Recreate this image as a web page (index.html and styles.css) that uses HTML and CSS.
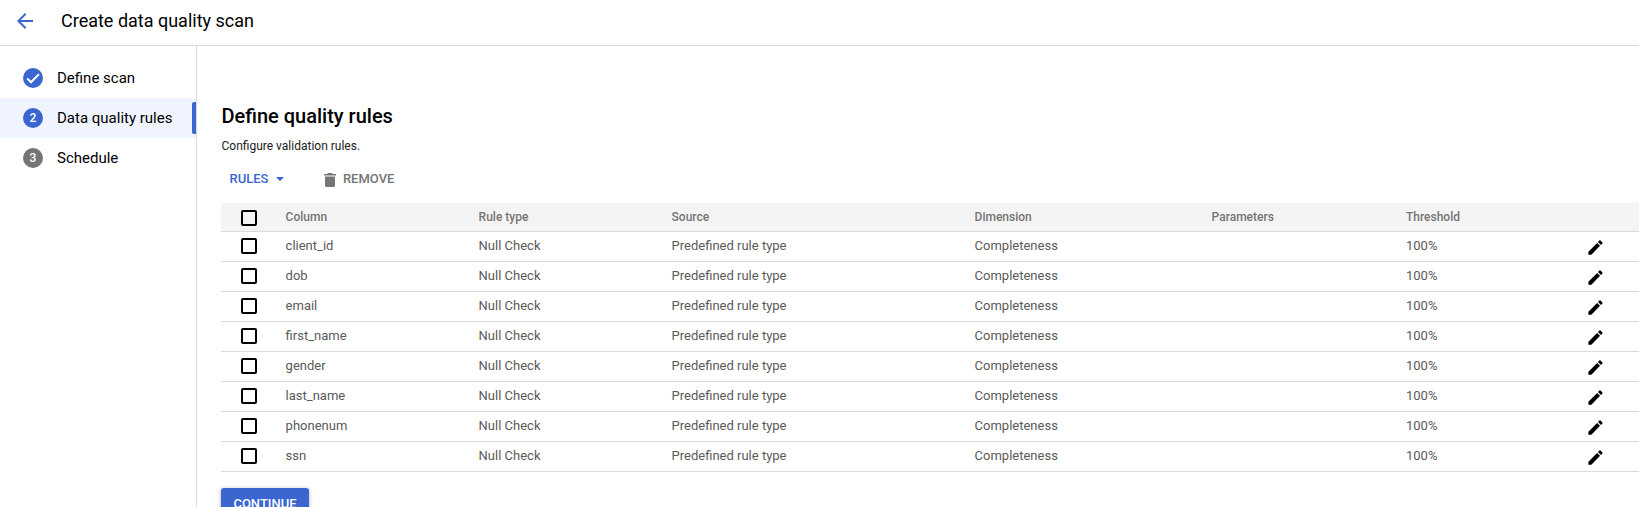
FILE: index.html
```html
<!DOCTYPE html>
<html lang="en">
<head>
<meta charset="utf-8">
<title>Create data quality scan</title>
<link rel="stylesheet" href="styles.css">
</head>
<body>
<svg width="0" height="0" class="defs" aria-hidden="true">
  <symbol id="edit" viewBox="0 0 24 24"><path d="M3 17.25V21h3.75L17.81 9.94l-3.75-3.75L3 17.25zM20.71 7.04a1 1 0 0 0 0-1.41l-2.34-2.34a1 1 0 0 0-1.41 0l-1.83 1.83 3.75 3.75 1.83-1.83z"/></symbol>
</svg>
<header class="topbar">
  <svg class="back" viewBox="0 0 24 24"><path d="M20 11H7.8l5.6-5.6L12 4l-8 8 8 8 1.4-1.4L7.8 13H20z"/></svg>
  <h1 class="title">Create data quality scan</h1>
</header>
<div class="layout">
  <nav class="steps">
    <a class="step"><span class="dot"><svg class="check" viewBox="0 0 20 20"><path d="M4.2 10.5l3.8 3.8 8-8.2"/></svg></span><span class="label">Define scan</span></a>
    <a class="step active"><span class="dot">2</span><span class="label">Data quality rules</span></a>
    <a class="step"><span class="dot pending">3</span><span class="label">Schedule</span></a>
  </nav>
  <main class="content">
    <h2 class="heading">Define quality rules</h2>
    <p class="desc">Configure validation rules.</p>
    <div class="toolbar">
      <button class="tool rules"><span>RULES</span><i class="caret"></i></button>
      <button class="tool remove"><svg class="trash" viewBox="0 0 12 14"><path d="M0 1h3.2L4 0h4l.8 1H12v1.4H0zM1 3.4h10v9A1.6 1.6 0 0 1 9.400 14H2.600A1.600 1.600 0 0 1 1 12.400z"/></svg><span>REMOVE</span></button>
    </div>
    <div class="table">
      <div class="row head"><i class="box"></i><span>Column</span><span>Rule type</span><span>Source</span><span>Dimension</span><span>Parameters</span><span>Threshold</span><span></span></div>
      <div class="row"><i class="box"></i><span>client_id</span><span>Null Check</span><span>Predefined rule type</span><span>Completeness</span><span></span><span>100%</span><svg class="edit"><use href="#edit"/></svg></div>
      <div class="row"><i class="box"></i><span>dob</span><span>Null Check</span><span>Predefined rule type</span><span>Completeness</span><span></span><span>100%</span><svg class="edit"><use href="#edit"/></svg></div>
      <div class="row"><i class="box"></i><span>email</span><span>Null Check</span><span>Predefined rule type</span><span>Completeness</span><span></span><span>100%</span><svg class="edit"><use href="#edit"/></svg></div>
      <div class="row"><i class="box"></i><span>first_name</span><span>Null Check</span><span>Predefined rule type</span><span>Completeness</span><span></span><span>100%</span><svg class="edit"><use href="#edit"/></svg></div>
      <div class="row"><i class="box"></i><span>gender</span><span>Null Check</span><span>Predefined rule type</span><span>Completeness</span><span></span><span>100%</span><svg class="edit"><use href="#edit"/></svg></div>
      <div class="row"><i class="box"></i><span>last_name</span><span>Null Check</span><span>Predefined rule type</span><span>Completeness</span><span></span><span>100%</span><svg class="edit"><use href="#edit"/></svg></div>
      <div class="row"><i class="box"></i><span>phonenum</span><span>Null Check</span><span>Predefined rule type</span><span>Completeness</span><span></span><span>100%</span><svg class="edit"><use href="#edit"/></svg></div>
      <div class="row"><i class="box"></i><span>ssn</span><span>Null Check</span><span>Predefined rule type</span><span>Completeness</span><span></span><span>100%</span><svg class="edit"><use href="#edit"/></svg></div>
    </div>
    <button class="continue">CONTINUE</button>
  </main>
</div>
</body>
</html>
```
FILE: styles.css
```css
* { box-sizing: border-box; }
html, body { margin: 0; height: 100%; overflow: hidden; }
body { display: flex; flex-direction: column; background: #fff; color: #000; font-family: Roboto, "Liberation Sans", sans-serif; }
h1, h2, p { margin: 0; }
button { border: 0; background: none; padding: 0; font-family: inherit; }
.defs { display: none; }

.topbar { flex: none; height: 46px; border-bottom: 1px solid #dadada; display: flex; align-items: center; padding: 0 0 3px 13px; }
.back { width: 24px; height: 24px; margin-right: 24px; fill: #3b66d0; }
.title { font-size: 18px; line-height: 24px; font-weight: 400; }

.layout { flex: 1; display: flex; min-height: 0; }
.steps { flex: none; width: 197px; border-right: 1px solid #dadada; padding-top: 12px; }
.step { display: flex; align-items: center; height: 40px; padding-left: 23px; font-size: 15px; }
.dot { width: 20px; height: 20px; margin-right: 14px; border-radius: 50%; background: #3b66d0; color: #fff; display: flex; align-items: center; justify-content: center; font-size: 12px; font-weight: 500; }
.pending { background: #757575; }
.check { width: 20px; height: 20px; fill: none; stroke: #fff; stroke-width: 2; }
.active { background: #f0f4fe; }
.active::after { content: ""; width: 4px; height: 32px; margin-left: auto; background: #3b66d0; border-radius: 2px 0 0 2px; }

.content { flex: 1; padding: 58px 0 0 24px; min-width: 0; }
.heading { padding-left: 0.5px; font-size: 20px; line-height: 24px; font-weight: 500; }
.desc { padding-left: 0.5px; margin-top: 10px; font-size: 12px; line-height: 16px; color: #212121; }
.toolbar { display: flex; align-items: center; height: 32px; margin-top: 9px; padding-left: 8.5px; }
.tool { display: flex; align-items: center; font-size: 13px; font-weight: 500; line-height: 20px; }
.rules { color: #3b66d0; }
.caret { margin-left: 7.5px; border: 4px solid transparent; border-top-color: #3b66d0; border-bottom: 0; }
.remove { color: #757575; margin-left: 40px; }
.trash { width: 12px; height: 14px; margin: 2px 7px 0 0; fill: #757575; }

.table { margin-top: 8px; }
.row { display: grid; grid-template-columns: 64.6px 193px 193px 303px 237px 194.4px 181px 1fr; align-items: center; height: 30px; padding-bottom: 1px; border-bottom: 1px solid #dadada; font-size: 13px; color: #5a5a5a; }
.row span { padding-bottom: 2px; }
.head { height: 29px; padding-bottom: 0; background: #f4f4f4; color: #757575; font-size: 12px; font-weight: 500; }
.head span { padding-bottom: 0; }
.box { width: 16px; height: 16px; margin-left: 20px; border: 2px solid #000; border-radius: 2px; }
.head .box { margin-top: 2px; }
.edit { width: 19px; height: 19px; margin: 3px 0 0 -1px; fill: #000; }

.continue { display: block; width: 88px; height: 32px; margin-top: 16px; padding-bottom: 2px; border-radius: 3px; background: #3b66d0; color: #fff; font-size: 13px; font-weight: 500; box-shadow: 0 1px 4px rgba(0, 0, 0, .3); }
```
